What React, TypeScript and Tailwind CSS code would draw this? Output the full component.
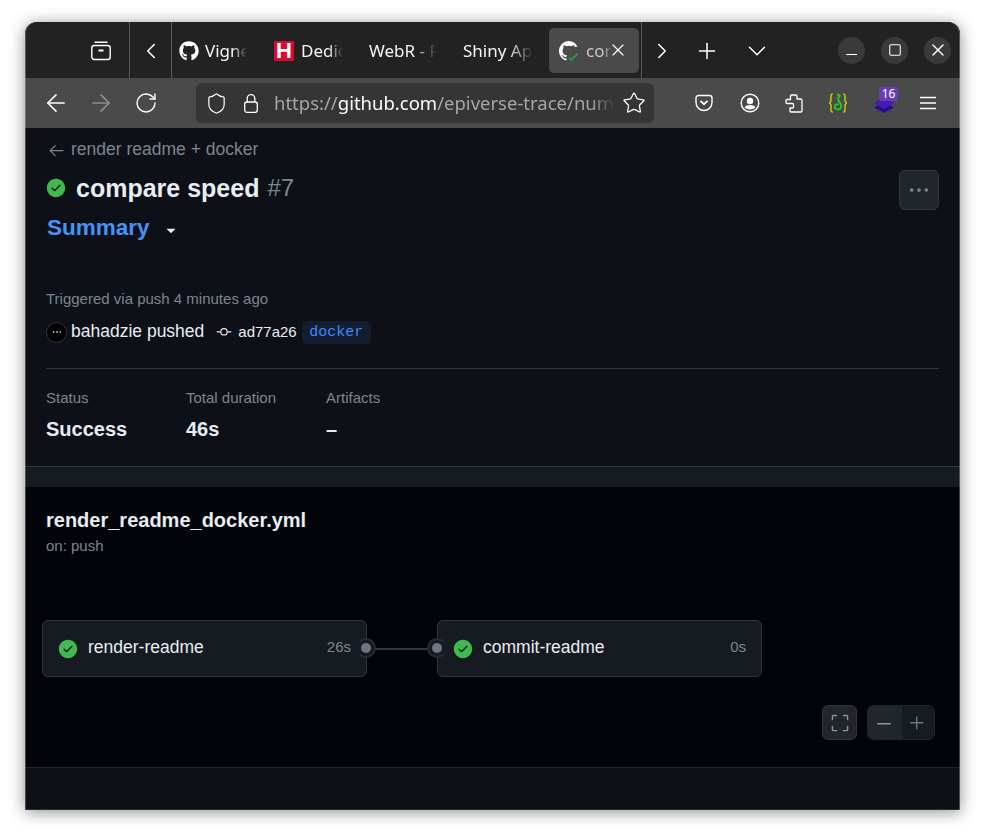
import { ArrowLeft, ArrowRight, ChevronDown, ChevronLeft, ChevronRight, Plus, RotateCw, Shield, Square, Star, X } from "lucide-react";
import { FaGithub } from "react-icons/fa";
import { GoArrowLeft, GoCheckCircleFill, GoDash, GoGitCommit, GoKebabHorizontal, GoPlus, GoScreenFull, GoTriangleDown } from "react-icons/go";

const fade = "[mask-image:linear-gradient(to_right,black_65%,transparent_100%)] overflow-hidden whitespace-nowrap";

function Tab({ width, textWidth, icon, label }: { width: string; textWidth: string; icon?: React.ReactNode; label: string }) {
  return (
    <div className={`flex h-full shrink-0 items-center pl-[7px] pt-[2px] ${width}`}>
      {icon}
      <span className={`${fade} ${textWidth} text-[17px] text-[#f4f4f4]`}>{label}</span>
    </div>
  );
}

function TabStrip() {
  return (
    <div className="flex h-[56px] items-center bg-[#222222] text-white">
      <div className="flex h-full w-[105px] shrink-0 items-center justify-end border-r border-[#5a5a5a] pr-[18px] pt-[2px]">
        <svg width="20" height="20" viewBox="0 0 20 20" fill="none" stroke="currentColor" strokeWidth="1.4">
          <path d="M3.5 1.2h13" />
          <rect x="0.8" y="4.5" width="18.4" height="14" rx="2.5" />
          <path d="M7.5 9.5h5" strokeWidth="1.8" />
        </svg>
      </div>
      <div className="flex h-full w-[42px] shrink-0 items-center justify-center border-r border-[#5a5a5a] pl-px pt-[2px]">
        <ChevronLeft size={26} strokeWidth={1.4} />
      </div>
      <Tab width="w-[95px]" textWidth="w-[42px]" icon={<FaGithub size={20} className="mr-[6px] shrink-0" />} label="Vignettes" />
      <Tab
        width="w-[95px]"
        textWidth="w-[42px]"
        icon={
          <span className="mr-[7px] flex h-[20px] w-[20px] shrink-0 items-center justify-center bg-[#d80a30] font-['Liberation_Sans',sans-serif] text-[22px] font-bold leading-none text-white">
            H
          </span>
        }
        label="Dedicated"
      />
      <Tab width="w-[94px]" textWidth="w-[68px]" label="WebR - R in" />
      <Tab width="w-[93px]" textWidth="w-[70px]" label="Shiny Apps" />
      <div className="relative flex h-[45px] w-[90px] shrink-0 items-center rounded-[5px] bg-[#4a4a4a] pl-[10px] pt-[1px]">
        <svg width="20" height="20" viewBox="0 0 20 20" className="mr-[7px] shrink-0">
          <path
            fill="#fff"
            d="M10 0C4.5 0 0 4.5 0 10c0 4.4 2.9 8.2 6.8 9.5.5.1.7-.2.7-.5v-1.7c-2.8.6-3.4-1.3-3.4-1.3-.5-1.2-1.1-1.5-1.1-1.5-.9-.6.1-.6.1-.6 1 .1 1.5 1 1.5 1 .9 1.5 2.3 1.1 2.9.8.1-.6.3-1.1.6-1.3-2.2-.3-4.5-1.1-4.5-4.9 0-1.1.4-2 1-2.7-.1-.3-.4-1.3.1-2.6 0 0 .8-.3 2.7 1a9.5 9.5 0 0 1 5 0c1.9-1.3 2.7-1 2.7-1 .3.7.4 1.3.4 1.8l2.9-.6A10 10 0 0 0 10 0Z"
          />
          <path d="M10 16.5l2.5 2.5 6-6.5" fill="none" stroke="#2ea043" strokeWidth="1.6" />
        </svg>
        <span className={`${fade} w-[26px] text-[17px] text-[#c9c9c9]`}>compare</span>
        <X size={20} strokeWidth={1.4} className="absolute left-[59px] top-[12px]" />
      </div>
      <div className="ml-[2px] h-full w-px shrink-0 bg-[#5a5a5a]" />
      <div className="flex h-full w-[39px] shrink-0 items-center justify-center pt-[2px]">
        <ChevronRight size={26} strokeWidth={1.4} />
      </div>
      <div className="flex h-full w-[52px] shrink-0 items-center justify-center pt-[2px]">
        <Plus size={26} strokeWidth={1.4} />
      </div>
      <div className="flex h-full w-[48px] shrink-0 items-center justify-center pt-[2px]">
        <ChevronDown size={30} strokeWidth={1.2} />
      </div>
      <div className="ml-[57px] flex shrink-0 items-center gap-[16px]">
        <span className="flex h-[27px] w-[27px] items-center justify-center rounded-full bg-[#3a3a3a]">
          <span className="mt-[9px] h-[1.5px] w-[11px] bg-white" />
        </span>
        <span className="flex h-[27px] w-[27px] items-center justify-center rounded-full bg-[#3a3a3a]">
          <Square size={14} strokeWidth={1.8} />
        </span>
        <span className="flex h-[27px] w-[27px] items-center justify-center rounded-full bg-[#3a3a3a]">
          <X size={20} strokeWidth={1.6} />
        </span>
      </div>
    </div>
  );
}

function Toolbar() {
  return (
    <div className="flex h-[50px] items-center bg-[#4a4a4a] text-white">
      <div className="flex w-[171px] shrink-0 items-center pl-[17px]">
        <ArrowLeft size={28} strokeWidth={1.35} />
        <ArrowRight size={28} strokeWidth={1.35} className="ml-[17px] text-[#8f8f8f]" />
        <RotateCw size={24} strokeWidth={1.4} className="ml-[19px]" />
      </div>
      <div className="flex h-[40px] w-[458px] shrink-0 items-center rounded-[6px] bg-[#353535] pl-[9px]">
        <Shield size={23} strokeWidth={1.25} />
        <svg width="14" height="19" viewBox="0 0 14 19" fill="none" stroke="#fff" strokeWidth="1.3" className="ml-[16px]">
          <rect x="0.7" y="8" width="12.6" height="10.3" rx="2.2" />
          <path d="M3.2 8V4.5a3.8 3.8 0 0 1 7.6 0V8" />
        </svg>
        <span className="ml-[16px] w-[341px] overflow-hidden whitespace-nowrap font-['Noto_Sans',sans-serif] text-[18.5px] text-[#a5a5a5] [mask-image:linear-gradient(to_right,black_93%,transparent_100%)]">
          https://<span className="text-white">github.com</span>/epiverse-trace/numberize
        </span>
        <Star size={24} strokeWidth={1.25} className="ml-[7px]" />
      </div>
      <div className="ml-[41px] flex shrink-0 items-center">
        <svg width="18" height="18" viewBox="0 0 18 18" fill="none" stroke="currentColor" strokeWidth="1.4">
          <path d="M1 4a2.5 2.5 0 0 1 2.5-2.5h11A2.5 2.5 0 0 1 17 4v4.5a8 8 0 0 1-16 0Z" />
          <path d="M5.5 6.8 9 10.2l3.5-3.4" strokeWidth="1.8" />
        </svg>
        <svg width="20" height="20" viewBox="0 0 20 20" fill="none" className="ml-[27px]">
          <circle cx="10" cy="10" r="8.8" stroke="#fff" strokeWidth="1.4" />
          <circle cx="10" cy="8" r="3.2" fill="#fff" />
          <path d="M4.5 14.5c1-2 3-2.6 5.5-2.6s4.5.6 5.5 2.6c-3 2.6-8 2.6-11 0Z" fill="#fff" />
        </svg>
        <svg width="18" height="19" viewBox="0 0 18 19" fill="none" stroke="#fff" strokeWidth="1.3" strokeLinejoin="round" className="ml-[25px]">
          <path d="M6.5 1h4A1.5 1.5 0 0 1 12 2.5V5h3.5A1.5 1.5 0 0 1 17 6.5V17a1 1 0 0 1-1 1H6a1 1 0 0 1-1-1v-3h2.5a1 1 0 0 0 1-1v-2.5a1 1 0 0 0-1-1H2a1 1 0 0 1-1-1v-2a1 1 0 0 1 1-1h3.5V2a1 1 0 0 1 1-1Z" />
        </svg>
        <svg width="18" height="20" viewBox="0 0 18 20" fill="none" className="ml-[26px]">
          <path d="M4 1H3C2 1 2 2 2 3v5L.6 10 2 12v5c0 1 0 2 1 2h1" stroke="#efe000" strokeWidth="1.2" />
          <path d="M14 1h1c1 0 1 1 1 2v5l1.4 2-1.4 2v5c0 1 0 2-1 2h-1" stroke="#efe000" strokeWidth="1.2" />
          <path d="M8 2.2c1.6-1 3.2-.2 2.6 1.2L9 5l1 3.5 2 3c1 2.5-.5 5-3 5s-4-2-3-4c.7-1.2 2.5-1.5 3.5-.5" stroke="#1fd11f" strokeWidth="1.9" />
        </svg>
        <div className="relative ml-[27px] h-[20px] w-[20px]">
          <svg width="20" height="20" viewBox="0 0 20 20">
            <path d="M10 9 20 14.5 10 20 0 14.5Z" fill="#2d0a8c" />
            <path d="M10 4 20 10 10 16 0 10Z" fill="#4a1ab8" />
          </svg>
          <span className="absolute left-[5px] top-[-6px] flex h-[14px] w-[19px] items-center justify-center rounded-[2px] bg-[#6b3bb5] font-['Noto_Sans',sans-serif] text-[12px] leading-none text-white">
            16
          </span>
        </div>
        <svg width="16" height="14" viewBox="0 0 16 14" stroke="#fff" strokeWidth="1.4" className="ml-[26px]">
          <path d="M0 1.5h16M0 7h16M0 12.5h16" />
        </svg>
      </div>
    </div>
  );
}

function Stat({ label, value }: { label: string; value: string }) {
  return (
    <div className="w-[140px]">
      <div className="text-[15px] leading-[20px] text-[#7d8590]">{label}</div>
      <div className="mt-[6px] text-[20px] font-bold leading-[30px] text-[#e6edf3]">{value}</div>
    </div>
  );
}

function Summary() {
  return (
    <div className="h-[339px] border-b border-[#30363d] bg-[#0d1117] px-[21px]">
      <div className="flex h-[42px] items-center text-[17.5px] text-[#7d8590]">
        <GoArrowLeft size={19} className="ml-px mt-[2px]" />
        <span className="ml-[5px]">render readme + docker</span>
      </div>
      <div className="flex items-start justify-between">
        <div>
          <div className="flex items-center">
            <GoCheckCircleFill size={20} className="text-[#3fb950]" />
            <h1 className="ml-[10px] text-[25px] font-bold leading-[36px] text-[#e6edf3]">compare speed</h1>
            <span className="ml-[8px] text-[24px] font-light text-[#7d8590]">#7</span>
          </div>
          <div className="mt-[4px] flex h-[36px] items-center">
            <span className="ml-px text-[22.5px] font-bold text-[#4493f8]">Summary</span>
            <GoTriangleDown size={16} className="ml-[13px] mt-[5px] text-[#e6edf3]" />
          </div>
        </div>
        <div className="flex h-[40px] w-[40px] items-center justify-center rounded-[6px] border border-[#30363d] bg-[#21262d] text-[#7d8590]">
          <GoKebabHorizontal size={22} />
        </div>
      </div>
      <p className="mt-[43px] text-[15px] leading-[20px] text-[#7d8590]">Triggered via push 4 minutes ago</p>
      <div className="mt-[11px] flex h-[24px] items-center">
        <span className="flex h-[21px] w-[21px] items-center justify-center rounded-full border border-[#30363d] bg-black text-white">
          <GoKebabHorizontal size={10} />
        </span>
        <span className="mb-[2px] ml-[4px] text-[17.5px] text-[#e6edf3]">bahadzie pushed</span>
        <GoGitCommit size={18} className="ml-[11px] text-[#e6edf3]" />
        <span className="ml-[5px] text-[15px] text-[#e6edf3]">ad77a26</span>
        <span className="ml-[5px] flex h-[23px] w-[69px] items-center justify-center rounded-[6px] bg-[#121d2f] pt-[2px] font-['Liberation_Mono',monospace] text-[15px] text-[#388bfd]">
          docker
        </span>
      </div>
      <div className="mt-[24px] border-t border-[#30363d] pt-[19px]">
        <div className="flex">
          <Stat label="Status" value="Success" />
          <Stat label="Total duration" value="46s" />
          <Stat label="Artifacts" value="–" />
        </div>
      </div>
    </div>
  );
}

function JobNode({ name, time, portLeft }: { name: string; time: string; portLeft?: boolean }) {
  return (
    <div className="relative flex h-[57px] w-[325px] items-center rounded-[6px] border border-[#30363d] bg-[#161b22] pl-[15px] pr-[15px]">
      <GoCheckCircleFill size={20} className="shrink-0 text-[#3fb950]" />
      <span className="mb-[2px] ml-[10px] flex-1 text-[17.5px] text-[#e6edf3]">{name}</span>
      <span className="mb-[2px] text-[15px] text-[#7d8590]">{time}</span>
      <span
        className={`absolute top-[17px] flex h-[20px] w-[20px] items-center justify-center rounded-full border-2 bg-[#161b22] ${
          portLeft ? "left-[-11px] border-[#262b33] border-r-transparent" : "right-[-10px] border-[#262b33] border-l-transparent"
        }`}
      >
        <span className="h-[10px] w-[10px] rounded-full bg-[#6e7681]" />
      </span>
    </div>
  );
}

function Graph() {
  return (
    <div className="h-[281px] border-b border-[#21262d] bg-[#010409] pl-[17px]">
      <div className="pl-[4px] pt-[21px]">
        <div className="text-[20px] font-bold leading-[24px] text-[#e6edf3]">render_readme_docker.yml</div>
        <div className="mt-[4px] text-[15px] leading-[20px] text-[#7d8590]">on: push</div>
      </div>
      <div className="mt-[64px] flex items-center">
        <JobNode name="render-readme" time="26s" />
        <div className="h-[2px] w-[70px] bg-[#30363d]" />
        <JobNode name="commit-readme" time="0s" portLeft />
      </div>
      <div className="mt-[28px] flex justify-end gap-[10px] pr-[25px]">
        <div className="flex h-[35px] w-[35px] items-center justify-center rounded-[6px] border border-[#30363d] bg-[#21262d] text-[#8b949e]">
          <GoScreenFull size={22} />
        </div>
        <div className="flex h-[35px] w-[68px] overflow-hidden rounded-[6px] border border-[#21262d]">
          <div className="flex w-[34px] items-center justify-center bg-[#21262d] pr-[2px] text-[#8b949e]">
            <GoDash size={22} />
          </div>
          <div className="flex flex-1 items-center justify-center bg-[#161b22] pr-[2px] text-[#6e7681]">
            <GoPlus size={22} />
          </div>
        </div>
      </div>
    </div>
  );
}

export default function App() {
  return (
    <div className="h-[838px] w-[985px] overflow-hidden bg-white pl-[25px] pt-[22px]">
      <div className="relative h-[788px] w-[935px] overflow-hidden rounded-t-[12px] bg-[#0d1117] font-['Liberation_Sans',sans-serif] shadow-[0_2px_16px_rgba(0,0,0,0.45)] after:pointer-events-none after:absolute after:inset-0 after:rounded-t-[12px] after:shadow-[inset_1px_0_0_rgba(255,255,255,0.25),inset_-1px_0_0_rgba(255,255,255,0.25),inset_0_-1px_0_rgba(255,255,255,0.12)]">
        <div className="font-['Noto_Sans',sans-serif]">
          <TabStrip />
          <Toolbar />
        </div>
        <Summary />
        <div className="h-[20px] bg-[#161b22]" />
        <Graph />
      </div>
    </div>
  );
}
